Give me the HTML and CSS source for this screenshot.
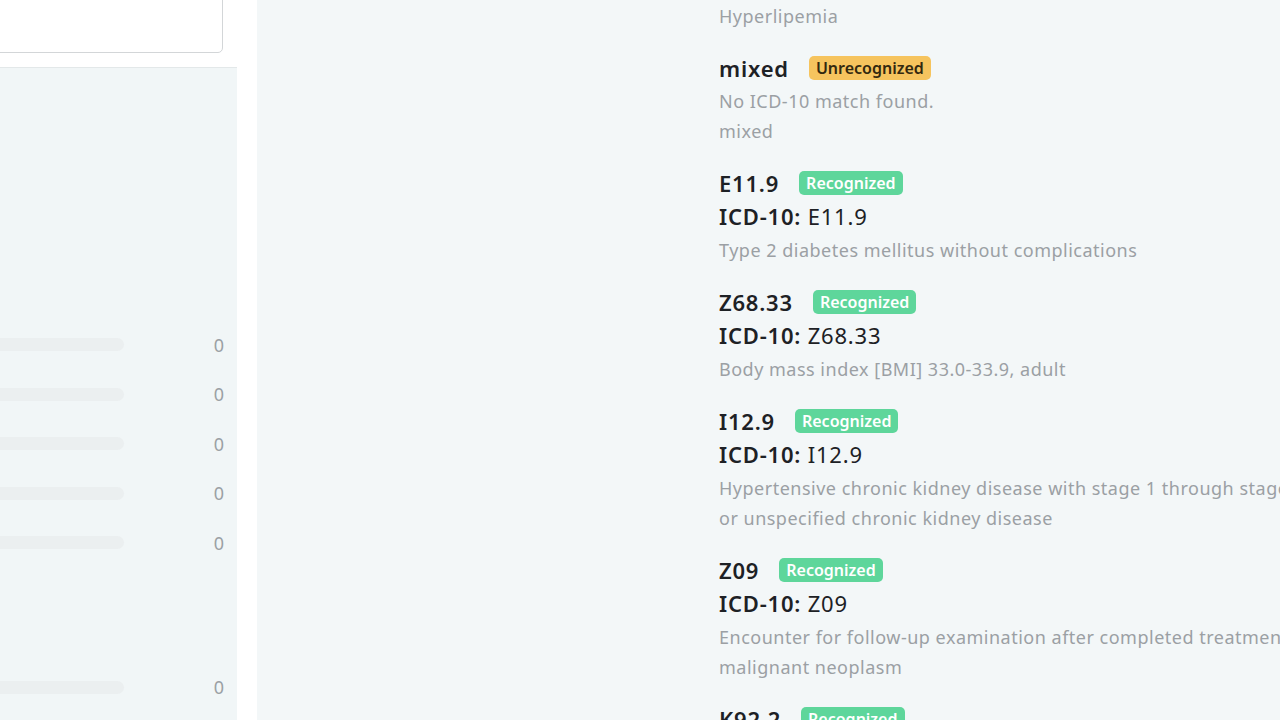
FILE: index.html
```html
<!DOCTYPE html>
<html>
<head>
<meta charset="utf-8">
<link rel="stylesheet" href="styles.css">
</head>
<body>
<div class="page">
  <aside class="sidebar">
    <div class="card"></div>
    <div class="panel">
      <div class="rows">
        <div class="row"><span class="bar"></span><span class="count">0</span></div>
        <div class="row"><span class="bar"></span><span class="count">0</span></div>
        <div class="row"><span class="bar"></span><span class="count">0</span></div>
        <div class="row"><span class="bar"></span><span class="count">0</span></div>
        <div class="row"><span class="bar"></span><span class="count">0</span></div>
        <div class="row empty"></div>
        <div class="row empty"></div>
        <div class="row"><span class="bar"></span><span class="count">0</span></div>
      </div>
    </div>
  </aside>
  <main class="main">
    <div class="list">
      <div class="item">
        <p class="desc">Hyperlipemia</p>
      </div>
      <div class="item">
        <div class="head"><span class="code">mixed</span><span class="badge warn">Unrecognized</span></div>
        <p class="desc">No ICD-10 match found.</p>
        <p class="desc">mixed</p>
      </div>
      <div class="item">
        <div class="head"><span class="code">E11.9</span><span class="badge ok">Recognized</span></div>
        <div class="icd"><b>ICD-10:</b> E11.9</div>
        <p class="desc">Type 2 diabetes mellitus without complications</p>
      </div>
      <div class="item">
        <div class="head"><span class="code">Z68.33</span><span class="badge ok">Recognized</span></div>
        <div class="icd"><b>ICD-10:</b> Z68.33</div>
        <p class="desc">Body mass index [BMI] 33.0-33.9, adult</p>
      </div>
      <div class="item">
        <div class="head"><span class="code">I12.9</span><span class="badge ok">Recognized</span></div>
        <div class="icd"><b>ICD-10:</b> I12.9</div>
        <p class="desc">Hypertensive chronic kidney disease with stage 1 through stage 4 chronic kidney disease, or unspecified chronic kidney disease</p>
      </div>
      <div class="item">
        <div class="head"><span class="code">Z09</span><span class="badge ok">Recognized</span></div>
        <div class="icd"><b>ICD-10:</b> Z09</div>
        <p class="desc">Encounter for follow-up examination after completed treatment for conditions other than malignant neoplasm</p>
      </div>
      <div class="item">
        <div class="head"><span class="code">K92.2</span><span class="badge ok">Recognized</span></div>
        <div class="icd"><b>ICD-10:</b> K92.2</div>
        <p class="desc">Gastrointestinal hemorrhage, unspecified</p>
      </div>
    </div>
  </main>
</div>
</body>
</html>
```

FILE: styles.css
```css
html, body {
  margin: 0;
  padding: 0;
  width: 1280px;
  height: 720px;
  overflow: hidden;
  background: #f3f7f8;
  font-family: "Noto Sans", "Open Sans", sans-serif;
  color: #1d2125;
}

.page {
  display: flex;
  width: 1280px;
  height: 720px;
}

.sidebar {
  flex: 0 0 257px;
  box-sizing: border-box;
  padding-right: 20px;
  background: #ffffff;
  display: flex;
  flex-direction: column;
}

.card {
  height: 62px;
  margin-top: -11px;
  margin-left: -20px;
  margin-right: 14px;
  background: #ffffff;
  border: 1px solid #d3d6d8;
  border-radius: 5px;
}

.panel {
  margin-top: 14px;
  flex: 1;
  background: #f1f6f7;
  border-top: 1px solid #e3e8e9;
}

.rows {
  padding-top: 252px;
  display: flex;
  flex-direction: column;
}

.row {
  height: 49.5px;
  display: flex;
  align-items: center;
  justify-content: space-between;
  padding-right: 13px;
}

.row.empty {
  height: 47.5px;
}

.bar {
  width: 124px;
  height: 13px;
  border-radius: 0 7px 7px 0;
  background: #ebeff0;
}

.count {
  font-size: 18px;
  color: #9ba1a4;
}

.main {
  flex: 1;
  min-width: 0;
  padding-left: 462px;
}

.list {
  width: 812px;
  padding-top: 1px;
  display: flex;
  flex-direction: column;
  gap: 21px;
}

.item {
  display: flex;
  flex-direction: column;
}

.head {
  height: 34px;
  box-sizing: border-box;
  padding-bottom: 3px;
  display: flex;
  align-items: center;
  gap: 20px;
}

.code {
  font-size: 22px;
  font-weight: 600;
  letter-spacing: 0.8px;
  color: #1d2125;
}

.badge {
  font-size: 16px;
  font-weight: 600;
  line-height: 24px;
  padding: 0 7px;
  border-radius: 5px;
}

.badge.ok {
  background: #5ed69b;
  color: #ffffff;
}

.badge.warn {
  background: #f6c45e;
  color: #33290f;
}

.icd {
  height: 34px;
  box-sizing: border-box;
  padding-bottom: 3px;
  font-size: 22px;
  line-height: 31px;
  letter-spacing: 0.8px;
  color: #1d2125;
}

.icd b {
  font-weight: 600;
}

.desc {
  margin: 0;
  font-size: 18px;
  line-height: 30px;
  letter-spacing: 0.5px;
  color: #9ba0a4;
}
```
